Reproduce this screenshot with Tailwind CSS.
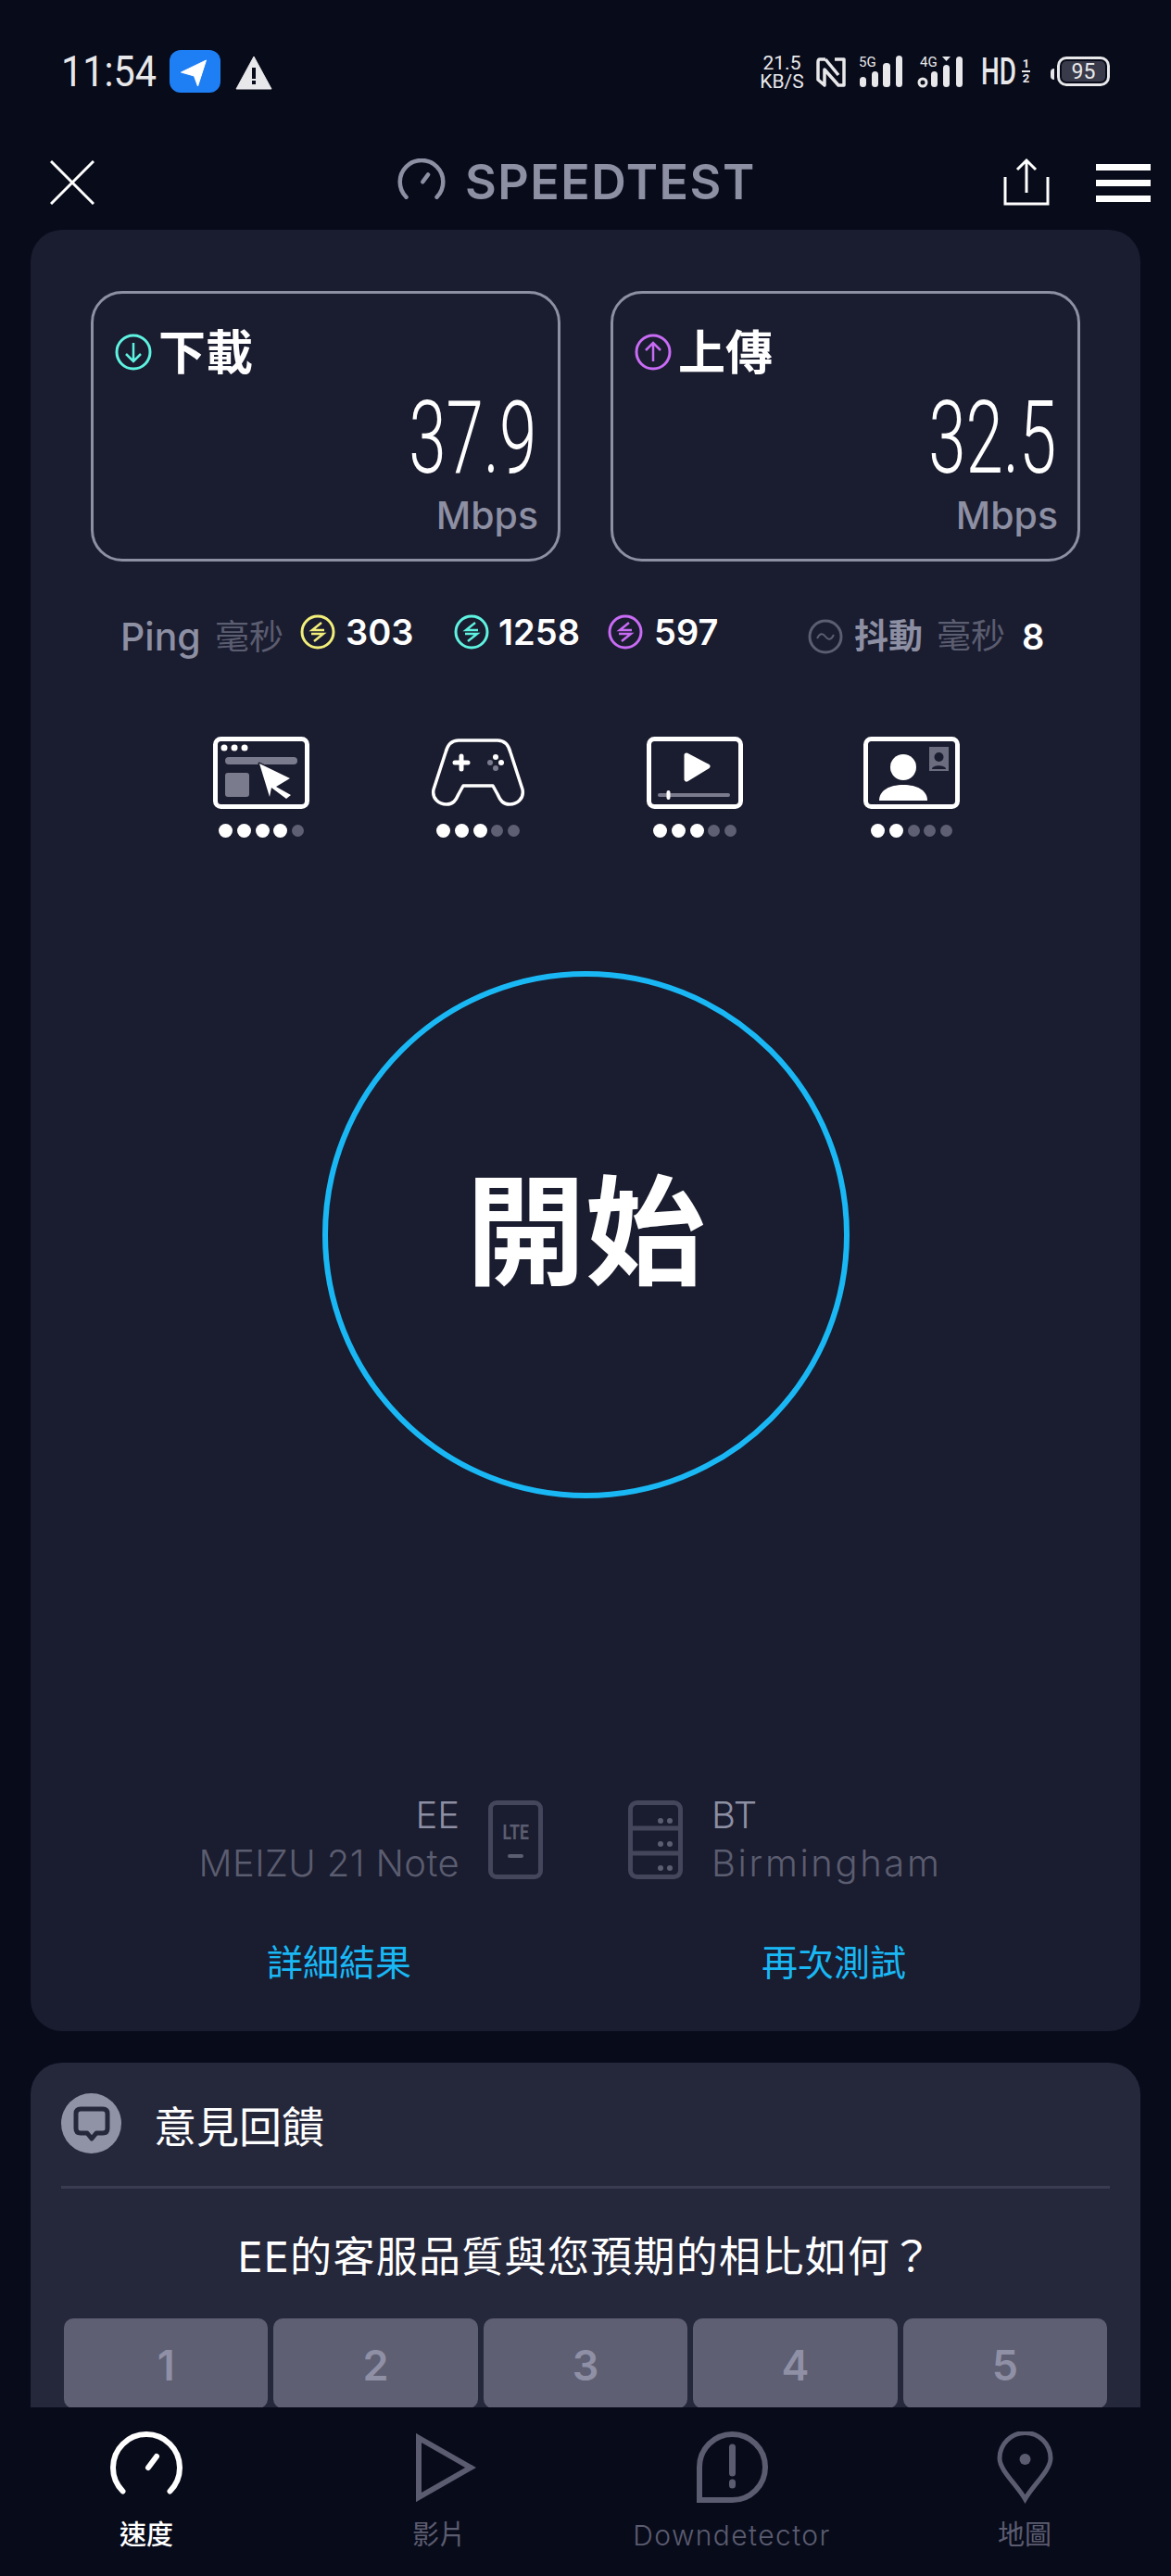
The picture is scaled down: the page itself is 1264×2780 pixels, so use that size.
<!DOCTYPE html>
<html lang="zh-Hant">
  <head>
    <meta charset="UTF-8" />
    <title>Speedtest</title>
    <script src="https://cdn.jsdelivr.net/npm/@tailwindcss/browser@4"></script>
  </head>
  <body class="bg-[#080b1a] text-white font-['Inter','Noto_Sans_CJK_TC',sans-serif]">
    <div class="w-[1264px] h-[2780px] flex flex-col overflow-hidden">
      <!-- status bar -->
      <div class="h-[140px] shrink-0 flex items-start pt-[54px] text-[#e8e8ea]">
        <div class="ml-[66px] w-[100px] h-[46px] flex items-center font-['Roboto'] text-[46px] leading-none whitespace-nowrap"><span class="inline-block origin-left scale-x-[.9]">11:54</span></div>
        <div class="ml-[17px] w-[55px] h-[46px] rounded-[12px] bg-[#1e7ff5] flex items-center justify-center">
          <svg width="34" height="36" viewBox="0 0 34 36"><path d="M28.5 6 L1.5 19 L15.5 23 L19.5 34 Z" fill="#fff" stroke="#fff" stroke-linejoin="round" /></svg>
        </div>
        <svg class="ml-[16px] mt-[6px]" width="40" height="37" viewBox="0 0 40 37"><path d="M20 1 L39 36 H1 Z" fill="#e8e8ea" stroke="#e8e8ea" stroke-linejoin="round" /><rect x="18" y="13" width="4" height="12" fill="#080b1a" /><rect x="18" y="27" width="4" height="4" fill="#080b1a" /></svg>

        <div class="ml-[526px] mt-[4px] w-[48px] flex flex-col items-center font-['Roboto'] text-[21px] leading-[20px]">
          <span>21.5</span><span>KB/S</span>
        </div>
        <svg class="ml-[13px] mt-[7px]" width="32" height="33" viewBox="0 0 32 33" fill="none" stroke="#e8e8ea" stroke-width="3.5" stroke-linejoin="round"><path d="M10 3 H4 Q2 3 2 6 V25 L9 31 V14 L24 31 H30 V3 H20" /><path d="M10 3 L24 20" /></svg>
        <div class="ml-[14px] mt-[6px] relative w-[48px] h-[35px]">
          <span class="absolute left-0 top-0 font-['Roboto'] text-[15px] leading-[14px]">5G</span>
          <svg class="absolute left-0 top-0" width="48" height="35" viewBox="0 0 48 35" fill="#e8e8ea"><rect x="1" y="23" width="7" height="11" rx="3.5" /><rect x="14" y="17" width="7" height="17" rx="3.5" /><rect x="26" y="8" width="8" height="26" rx="3.5" /><rect x="40" y="0" width="7" height="34" rx="3.5" /></svg>
        </div>
        <div class="ml-[15px] mt-[6px] relative w-[50px] h-[35px]">
          <span class="absolute left-[3px] top-0 font-['Roboto'] text-[15px] leading-[14px]">4G</span>
          <svg class="absolute left-0 top-0" width="50" height="35" viewBox="0 0 50 35" fill="#e8e8ea"><circle cx="6" cy="29" r="4" fill="none" stroke="#e8e8ea" stroke-width="3" /><rect x="15" y="17" width="7" height="17" rx="3.5" /><rect x="28" y="10" width="7" height="24" rx="3.5" /><rect x="42" y="1" width="7" height="33" rx="3.5" /><path d="M27 1 H36 L31.5 6 Z" /></svg>
        </div>
        <div class="ml-[19px] mt-[5px] w-[38px] font-['Roboto'] text-[41px] leading-[36px] font-medium scale-x-[.68] origin-left">HD</div>
        <div class="ml-[6px] mt-[8px] w-[9px] flex flex-col items-center font-['Roboto'] text-[13px] leading-[14px] font-bold"><span>1</span><span class="w-[9px] h-[2px] bg-[#e8e8ea]"></span><span>2</span></div>
        <div class="ml-[22px] mt-[20px] w-[4px] h-[12px] rounded-l-full bg-[#e8e8ea]"></div>
        <div class="ml-[3px] mt-[7px] w-[57px] h-[32px] rounded-[10px] border-[3px] border-[#e8e8ea] p-[2px]">
          <div class="h-full rounded-[5px] bg-[#3a3b4a] flex items-center justify-center font-['Roboto'] text-[23px] leading-none">95</div>
        </div>
      </div>

      <!-- header -->
      <div class="h-[108px] shrink-0 flex items-start">
        <svg class="ml-[54px] mt-[33px]" width="48" height="48" viewBox="0 0 48 48" stroke="#fff" stroke-width="3"><path d="M1 1 L47 47 M47 1 L1 47" /></svg>
        <svg class="ml-[327px] mt-[31px]" width="52" height="44" viewBox="0 0 78 68" fill="none" stroke="#8d8fa3" stroke-width="7" stroke-linecap="round"><path d="M13.5 64.5 A36 36 0 1 1 64.5 64.5" /><path d="M41 39 L50 27" /></svg>
        <div class="ml-[21px] mt-[29px] w-[312px] text-[52px] leading-[56px] font-semibold text-[#8d8fa3] tracking-[1.5px] whitespace-nowrap">SPEEDTEST</div>
        <svg class="ml-[269px] mt-[30px]" width="50" height="52" viewBox="0 0 50 52" fill="none" stroke="#fff" stroke-width="3"><path d="M2 21 V50 H48 V21" /><path d="M25 38 V3 M15 13 L25 3 L35 13" /></svg>
        <div class="ml-[50px] mt-[37px] w-[59px] flex flex-col gap-[10px]">
          <div class="h-[7px] bg-white"></div>
          <div class="h-[7px] bg-white"></div>
          <div class="h-[7px] bg-white"></div>
        </div>
      </div>

      <!-- main -->
      <div class="flex-1 overflow-hidden px-[33px]">
        <div class="h-[1944px] rounded-[34px] bg-[#1a1c2f] pt-[66px] overflow-hidden">
          <!-- result panels -->
          <div class="px-[65px] flex gap-[54px]">
            <div class="w-[507px] h-[292px] rounded-[34px] border-[3px] border-[#8d8fa3] flex flex-col pt-[38px] pl-[23px] pr-[23px]">
              <div class="flex items-center h-[50px]">
                <svg width="40" height="40" viewBox="0 0 40 40" fill="none" stroke="#5ef2e0" stroke-width="3"><circle cx="20" cy="20" r="18" /><path d="M20 10 V29 M12 22 L20 30 L28 22" stroke-width="2.5" /></svg>
                <span class="ml-[7px] mt-[2px] text-[51px] leading-[50px] font-bold whitespace-nowrap">下載</span>
              </div>
              <div class="mt-[20px] h-[96px] flex justify-end items-center font-['Roboto'] font-light text-[110px] leading-[96px]"><span class="inline-block origin-right scale-x-[.66]">37.9</span></div>
              <div class="mt-[13px] text-right text-[41px] leading-[44px] font-medium text-[#8d8fa3] -mr-[2px] whitespace-nowrap">Mbps</div>
            </div>
            <div class="w-[507px] h-[292px] rounded-[34px] border-[3px] border-[#8d8fa3] flex flex-col pt-[38px] pl-[23px] pr-[23px]">
              <div class="flex items-center h-[50px]">
                <svg width="40" height="40" viewBox="0 0 40 40" fill="none" stroke="#c86bf5" stroke-width="3"><circle cx="20" cy="20" r="18" /><path d="M20 30 V11 M12 18 L20 10 L28 18" stroke-width="2.5" /></svg>
                <span class="ml-[7px] mt-[2px] text-[51px] leading-[50px] font-bold whitespace-nowrap">上傳</span>
              </div>
              <div class="mt-[20px] h-[96px] flex justify-end items-center font-['Roboto'] font-light text-[110px] leading-[96px]"><span class="inline-block origin-right scale-x-[.66]">32.5</span></div>
              <div class="mt-[13px] text-right text-[41px] leading-[44px] font-medium text-[#8d8fa3] -mr-[2px] whitespace-nowrap">Mbps</div>
            </div>
          </div>

          <!-- ping row -->
          <div class="mt-[54px] h-[50px] pl-[97px] flex items-center whitespace-nowrap font-semibold text-[38px] leading-[44px]">
            <span class="mt-[4px] w-[102px] text-[41px] font-medium text-[#8d8fa3]">Ping</span>
            <span class="mt-[6px] w-[75px] text-[37px] font-normal text-[#5b5d70]">毫秒</span>
            <svg class="ml-[17px] mb-[7px]" width="38" height="38" viewBox="0 0 38 38" fill="none" stroke="#f2ee7a" stroke-width="3"><circle cx="19" cy="19" r="17" /><path d="M23 9 L13 17 H26 M12 21 H25 L15 29" stroke-width="2.5" /></svg>
            <span class="ml-[11px] mb-[7px] w-[70px]">303</span>
            <svg class="ml-[47px] mb-[7px]" width="38" height="38" viewBox="0 0 38 38" fill="none" stroke="#5ef2e0" stroke-width="3"><circle cx="19" cy="19" r="17" /><path d="M23 9 L13 17 H26 M12 21 H25 L15 29" stroke-width="2.5" /></svg>
            <span class="ml-[10px] mb-[7px] w-[90px]">1258</span>
            <svg class="ml-[28px] mb-[7px]" width="38" height="38" viewBox="0 0 38 38" fill="none" stroke="#c86bf5" stroke-width="3"><circle cx="19" cy="19" r="17" /><path d="M23 9 L13 17 H26 M12 21 H25 L15 29" stroke-width="2.5" /></svg>
            <span class="ml-[12px] mb-[7px] w-[68px]">597</span>
            <svg class="ml-[98px] mt-[4px]" width="38" height="38" viewBox="0 0 38 38" fill="none" stroke="#5b5d70" stroke-width="3"><circle cx="19" cy="19" r="17" /><path d="M10 21 C13 15 16 15 19 19 C22 23 25 23 28 17" stroke-width="2" /></svg>
            <span class="ml-[12px] mt-[4px] w-[74px] text-[37px] font-bold text-[#8d8fa3]">抖動</span>
            <span class="ml-[15px] mt-[4px] w-[75px] text-[37px] font-normal text-[#5b5d70]">毫秒</span>
            <span class="ml-[17px] mt-[4px]">8</span>
          </div>

          <!-- experience icons -->
          <div class="mt-[85px] pl-[197px] flex gap-[130px]">
            <div class="w-[104px] flex flex-col items-center">
              <svg width="104" height="78" viewBox="0 0 104 78"><rect x="2.5" y="2.5" width="99" height="73" rx="6" fill="none" stroke="#fff" stroke-width="5" /><circle cx="12" cy="12" r="3.5" fill="#fff" /><circle cx="23" cy="12" r="3.5" fill="#fff" /><circle cx="34" cy="12" r="3.5" fill="#fff" /><rect x="13" y="22" width="78" height="8" rx="4" fill="#7a7b8c" /><rect x="13" y="39" width="26" height="26" rx="3" fill="#7a7b8c" /><path d="M50 29 L83 45 L68 54 L84 63 L79 67 L63 55 L61 65 Z" fill="#fff" stroke="#1a1c2f" stroke-width="3" paint-order="stroke" stroke-linejoin="round" /></svg>
              <div class="mt-[16px] h-[15px] flex items-center gap-[4.6px]">
                <span class="size-[15px] rounded-full bg-white"></span><span class="size-[15px] rounded-full bg-white"></span><span class="size-[15px] rounded-full bg-white"></span><span class="size-[15px] rounded-full bg-white"></span><span class="size-[13px] rounded-full bg-[#5e5f72]"></span>
              </div>
            </div>
            <div class="w-[104px] flex flex-col items-center">
              <svg width="104" height="78" viewBox="0 0 100 78"><path d="M29 4 H71 C78 4 83 9 85 17 L98 57 C100 67 92 73 84 73 C77 73 74 69 71 62 L66 53 H34 L29 62 C26 69 23 73 16 73 C8 73 0 67 2 57 L15 17 C17 9 22 4 29 4 Z" fill="none" stroke="#fff" stroke-width="3.5" stroke-linejoin="round" /><path d="M32 21 V35 M25 28 H39" stroke="#fff" stroke-width="5" stroke-linecap="round" /><circle cx="69" cy="22" r="3" fill="#fff" /><circle cx="75" cy="28" r="3" fill="#fff" /><circle cx="63" cy="28" r="3" fill="#7a7b8c" /><circle cx="69" cy="34" r="3" fill="#7a7b8c" /></svg>
              <div class="mt-[16px] h-[15px] flex items-center gap-[4.6px]">
                <span class="size-[15px] rounded-full bg-white"></span><span class="size-[15px] rounded-full bg-white"></span><span class="size-[15px] rounded-full bg-white"></span><span class="size-[13px] rounded-full bg-[#5e5f72]"></span><span class="size-[13px] rounded-full bg-[#5e5f72]"></span>
              </div>
            </div>
            <div class="w-[104px] flex flex-col items-center">
              <svg width="104" height="78" viewBox="0 0 104 78"><rect x="2.5" y="2.5" width="99" height="73" rx="6" fill="none" stroke="#fff" stroke-width="5" /><path d="M43 20 L66 32 L43 46 Z" fill="#fff" stroke="#fff" stroke-width="5" stroke-linejoin="round" /><rect x="12" y="61" width="78" height="4" rx="2" fill="#7a7b8c" /><rect x="21.5" y="58" width="4" height="10" rx="2" fill="#fff" /></svg>
              <div class="mt-[16px] h-[15px] flex items-center gap-[4.6px]">
                <span class="size-[15px] rounded-full bg-white"></span><span class="size-[15px] rounded-full bg-white"></span><span class="size-[15px] rounded-full bg-white"></span><span class="size-[13px] rounded-full bg-[#5e5f72]"></span><span class="size-[13px] rounded-full bg-[#5e5f72]"></span>
              </div>
            </div>
            <div class="w-[104px] flex flex-col items-center">
              <svg width="104" height="78" viewBox="0 0 104 78"><rect x="2.5" y="2.5" width="99" height="73" rx="6" fill="none" stroke="#fff" stroke-width="5" /><ellipse cx="43" cy="33" rx="14" ry="14" fill="#fff" /><path d="M17 69 C17 58 28 52 43 52 C58 52 69 58 69 69 Z" fill="#fff" /><rect x="71" y="11" width="21" height="26" fill="#6c6d7e" /><circle cx="81.5" cy="22" r="5" fill="#1a1c2f" /><path d="M74 35 C74 30 89 30 89 35 Z" fill="#1a1c2f" /></svg>
              <div class="mt-[16px] h-[15px] flex items-center gap-[4.6px]">
                <span class="size-[15px] rounded-full bg-white"></span><span class="size-[15px] rounded-full bg-white"></span><span class="size-[13px] rounded-full bg-[#5e5f72]"></span><span class="size-[13px] rounded-full bg-[#5e5f72]"></span><span class="size-[13px] rounded-full bg-[#5e5f72]"></span>
              </div>
            </div>
          </div>

          <!-- start button -->
          <div class="mt-[144px] flex justify-center">
            <div class="size-[569px] pb-[4px] rounded-full border-[6px] border-[#19b8f5] flex items-center justify-center text-[129px] font-bold leading-none">開始</div>
          </div>

          <!-- carrier / server -->
          <div class="mt-[316px] h-[104px] flex items-center font-light whitespace-nowrap">
            <div class="w-[463px] text-right text-[40px] leading-[52px]">
              <div class="text-[#8d8fa3]">EE</div>
              <div class="text-[#5b5d70] tracking-[.4px]">MEIZU 21 Note</div>
            </div>
            <div class="ml-[31px] w-[59px] h-[85px] rounded-[9px] border-[5px] border-[#44465c] flex flex-col items-center">
              <span class="mt-[18px] font-['Roboto'] text-[22px] leading-[24px] font-bold text-[#5b5d70] scale-x-[.8]">LTE</span>
              <span class="mt-[11px] w-[17px] h-[4px] rounded-full bg-[#5b5d70]"></span>
            </div>
            <svg class="ml-[92px]" width="59" height="85" viewBox="0 0 59 85" fill="none" stroke="#44465c" stroke-width="5"><rect x="2.5" y="2.5" width="54" height="80" rx="7" /><path d="M2 30 H57 M2 57 H57" /><g fill="#5b5d70" stroke="none"><circle cx="35" cy="22" r="3" /><circle cx="45" cy="22" r="3" /><circle cx="35" cy="47" r="3" /><circle cx="45" cy="47" r="3" /><circle cx="35" cy="73" r="3" /><circle cx="45" cy="73" r="3" /></g></svg>
            <div class="ml-[31px] text-[40px] leading-[52px]">
              <div class="text-[#8d8fa3]">BT</div>
              <div class="text-[#5b5d70] tracking-[2.6px]">Birmingham</div>
            </div>
          </div>

          <!-- links -->
          <div class="mt-[56px] h-[50px] pl-[255px] flex items-center text-[39px] text-[#19b8f5] leading-[50px] whitespace-nowrap">
            <span class="w-[154px]">詳細結果</span>
            <span class="ml-[380px] w-[154px]">再次測試</span>
          </div>
        </div>

        <!-- feedback -->
        <div class="mt-[34px] rounded-t-[34px] bg-[#25273b] h-[400px] px-[33px] pt-[33px]">
          <div class="h-[65px] flex items-center">
            <div class="size-[65px] rounded-full bg-[#9092a6] flex items-center justify-center">
              <svg width="40" height="38" viewBox="0 0 40 38" fill="none" stroke="#25273b" stroke-width="5"><path d="M8 3 H32 Q37 3 37 8 V24 Q37 29 32 29 H25 L20 35 L15 29 H8 Q3 29 3 24 V8 Q3 3 8 3 Z" stroke-linejoin="round" /></svg>
            </div>
            <span class="ml-[35px] mt-[6px] text-[46px] leading-[50px] whitespace-nowrap">意見回饋</span>
          </div>
          <div class="mt-[35px] h-[3px] bg-[#3a3c52]"></div>
          <div class="mt-[44px] h-[60px] text-center text-[45px] leading-[60px] tracking-[1.3px] whitespace-nowrap">EE的客服品質與您預期的相比如何？</div>
          <div class="mt-[36px] mx-[3px] flex gap-[6px] text-[45px] font-semibold text-[#8f90a6]">
            <div class="flex-1 h-[97px] pt-[4px] rounded-[10px] bg-[#5e5f72] flex items-center justify-center">1</div>
            <div class="flex-1 h-[97px] pt-[4px] rounded-[10px] bg-[#5e5f72] flex items-center justify-center">2</div>
            <div class="flex-1 h-[97px] pt-[4px] rounded-[10px] bg-[#5e5f72] flex items-center justify-center">3</div>
            <div class="flex-1 h-[97px] pt-[4px] rounded-[10px] bg-[#5e5f72] flex items-center justify-center">4</div>
            <div class="flex-1 h-[97px] pt-[4px] rounded-[10px] bg-[#5e5f72] flex items-center justify-center">5</div>
          </div>
        </div>
      </div>

      <!-- bottom nav -->
      <div class="h-[182px] shrink-0 grid grid-cols-4 pt-[26px] text-[29px] leading-[36px] text-[#5b5c70]">
        <div class="flex flex-col items-center">
          <div class="h-[78px] flex items-start">
            <svg width="78" height="68" viewBox="0 0 78 68" fill="none" stroke="#fff" stroke-width="6" stroke-linecap="round"><path d="M13.5 64.5 A36 36 0 1 1 64.5 64.5" /><path d="M41 39 L50 27" /></svg>
          </div>
          <span class="mt-[16px] font-medium text-white">速度</span>
        </div>
        <div class="flex flex-col items-center">
          <div class="h-[78px] flex items-start pt-[2px] translate-x-[7px]">
            <svg width="65" height="74" viewBox="0 0 65 74" fill="none" stroke="#5b5c70" stroke-width="6"><path d="M3 5 L59 37 L3 69 Z" /></svg>
          </div>
          <span class="mt-[16px]">影片</span>
        </div>
        <div class="flex flex-col items-center">
          <div class="h-[78px]">
            <svg width="77" height="77" viewBox="0 0 77 77" fill="none" stroke="#5b5c70" stroke-width="6"><path d="M3 74 V38.5 A35.5 35.5 0 1 1 38.5 74 Z" /><path d="M38.5 17 V45" stroke-width="7" stroke-linecap="round" /><path d="M38.5 55 V58" stroke-width="7" stroke-linecap="round" /></svg>
          </div>
          <span class="mt-[16px] text-[30px] font-light tracking-[1.4px]">Downdetector</span>
        </div>
        <div class="flex flex-col items-center">
          <div class="h-[78px]">
            <svg width="61" height="78" viewBox="0 0 61 78" fill="none" stroke="#5b5c70" stroke-width="5"><path d="M30.5 73 C22 58 3 42 3 29 A27.5 27.5 0 0 1 58 29 C58 42 39 58 30.5 73 Z" /><circle cx="30.5" cy="30" r="6" fill="#5b5c70" stroke="none" /></svg>
          </div>
          <span class="mt-[16px]">地圖</span>
        </div>
      </div>
    </div>
  </body>
</html>
